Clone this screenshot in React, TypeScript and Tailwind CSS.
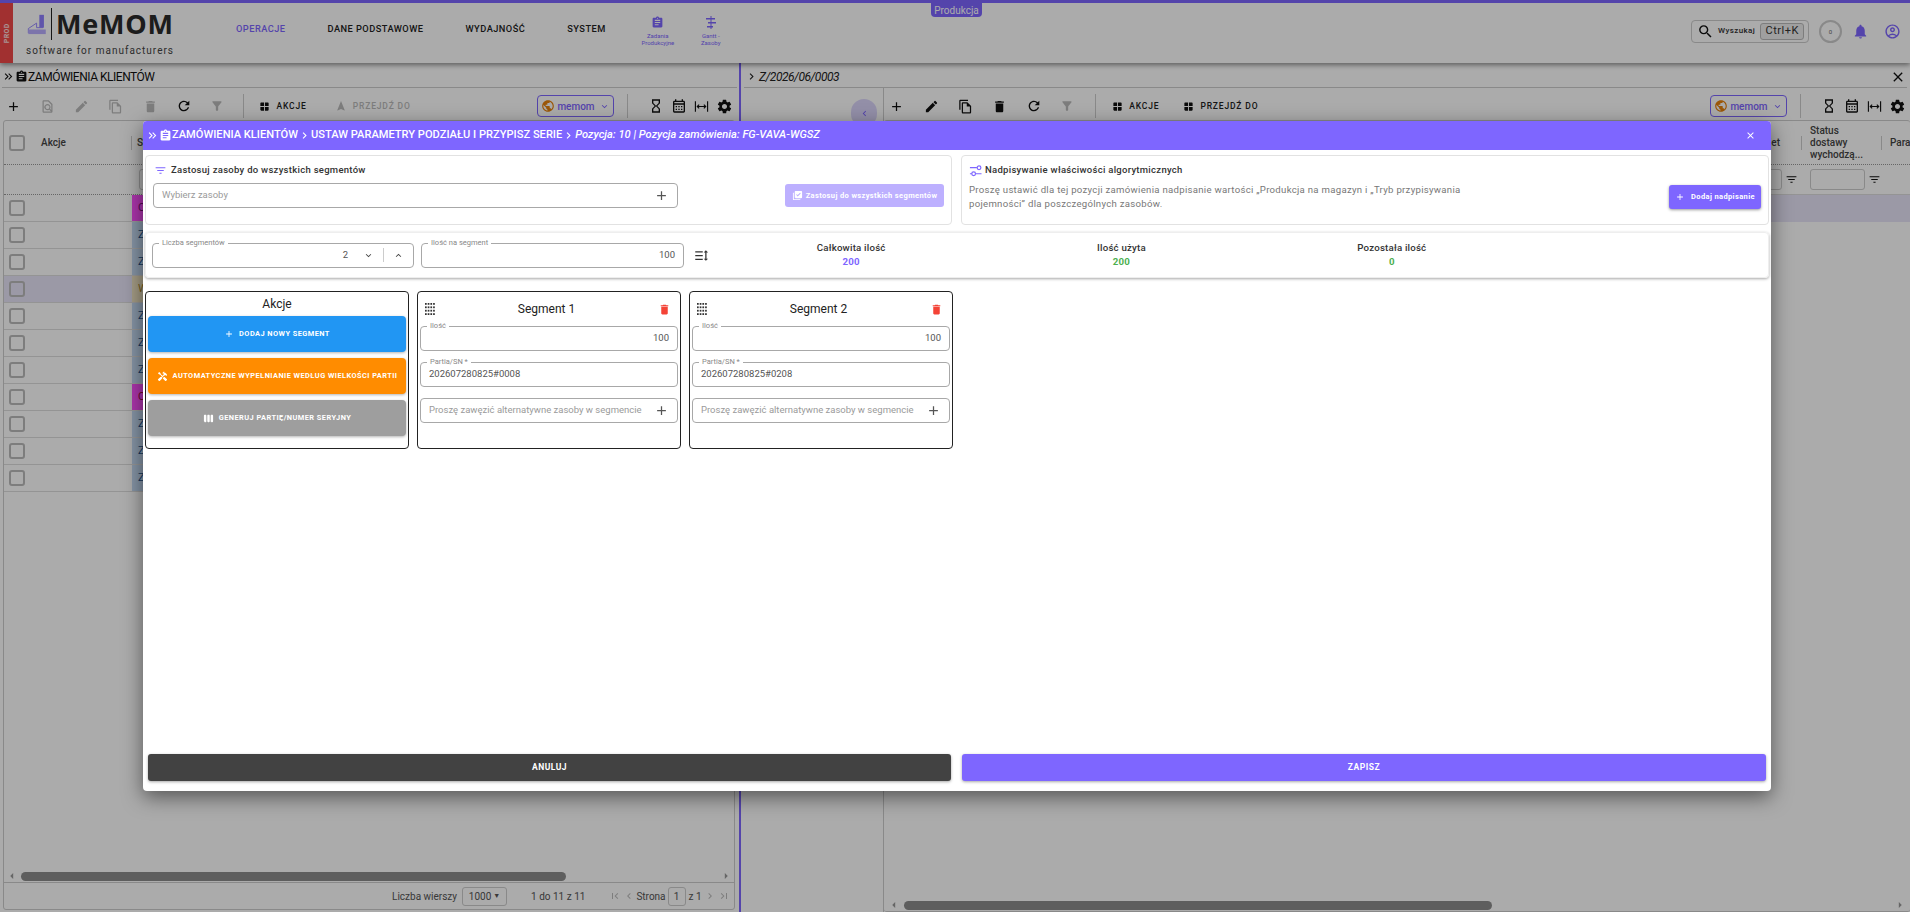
import type { ReactNode } from "react";
import {
  MdAdd,
  MdArrowLeft,
  MdArrowRight,
  MdAssignment,
  MdChevronLeft,
  MdChevronRight,
  MdClose,
  MdDelete,
  MdEdit,
  MdExpandLess,
  MdExpandMore,
  MdFilterAlt,
  MdFilterList,
  MdFirstPage,
  MdFormatLineSpacing,
  MdHandyman,
  MdHourglassEmpty,
  MdKeyboardDoubleArrowRight,
  MdLastPage,
  MdLibraryAddCheck,
  MdNavigation,
  MdNotifications,
  MdOutlineAccountCircle,
  MdOutlineCalendarMonth,
  MdOutlineFileCopy,
  MdOutlineFindInPage,
  MdPublic,
  MdRefresh,
  MdSearch,
  MdSettings,
  MdViewWeek,
  MdWindow,
} from "react-icons/md";

const ROWS = [
  { letter: "O", cell: "bg-[#ff4fff]", text: "text-[#7a0a7a]", selected: false },
  { letter: "Z", cell: "bg-[#c5dcf5]", text: "text-[#1a4f8a]", selected: false },
  { letter: "Z", cell: "bg-[#c5dcf5]", text: "text-[#1a4f8a]", selected: false },
  { letter: "W", cell: "bg-[#f2e6c4]", text: "text-[#b08a2a]", selected: true },
  { letter: "Z", cell: "bg-[#c5dcf5]", text: "text-[#1a4f8a]", selected: false },
  { letter: "Z", cell: "bg-[#c5dcf5]", text: "text-[#1a4f8a]", selected: false },
  { letter: "Z", cell: "bg-[#c5dcf5]", text: "text-[#1a4f8a]", selected: false },
  { letter: "O", cell: "bg-[#ff4fff]", text: "text-[#a00a3a]", selected: false },
  { letter: "Z", cell: "bg-[#c5dcf5]", text: "text-[#1a4f8a]", selected: false },
  { letter: "Z", cell: "bg-[#c5dcf5]", text: "text-[#1a4f8a]", selected: false },
  { letter: "Z", cell: "bg-[#c5dcf5]", text: "text-[#1a4f8a]", selected: false },
];

function FitColumnsIcon({ className }: { className?: string }) {
  return (
    <svg viewBox="0 0 16 16" className={className} fill="none" stroke="currentColor" strokeWidth="1.2">
      <path d="M1.5 2.5v11M14.5 2.5v11M3.5 8h9" />
      <path d="M5.5 6L3.5 8l2 2M10.5 6l2 2-2 2" />
    </svg>
  );
}

function DotsIcon() {
  return (
    <svg viewBox="0 0 10 13" className="h-[13px] w-[10px] text-[#333]" fill="currentColor">
      {[0, 1, 2, 3].map((y) =>
        [0, 1, 2, 3].map((x) => (
          <rect key={`${x}-${y}`} x={x * 2.7} y={y * 3.4} width="1.7" height="1.8" />
        )),
      )}
    </svg>
  );
}

function SlidersIcon() {
  return (
    <svg viewBox="0 0 14 14" className="mr-[3px] h-[13px] w-[13px] text-[#7e66ff]" fill="none" stroke="currentColor" strokeWidth="1.3">
      <path d="M1 4h7.5M1 10.5h2M7 10.5h6.5" />
      <circle cx="10.8" cy="4" r="2" />
      <circle cx="5" cy="10.5" r="2" />
    </svg>
  );
}

function Logo() {
  return (
    <div className="ml-[13px] flex w-[160px] shrink-0 flex-col">
      <div className="flex h-[40px] items-center pt-[1px]">
        <svg viewBox="0 0 22 24" className="ml-[1px] h-[22px] w-[21px] shrink-0" fill="none">
          <path d="M1 22V17l9-6v5h7" stroke="#8f7fff" strokeWidth="1" />
          <rect x="13" y="2" width="5" height="14" fill="#8f7fff" />
          <rect x="1" y="18" width="19" height="5" fill="#b9adff" />
        </svg>
        <div className="ml-[3px] mr-[4px] h-[32px] w-px shrink-0 bg-[#222]" />
        <span className="text-[27px] font-bold leading-none tracking-[0.03em] text-[#2b2b2b] font-['Open_Sans',sans-serif]">
          MeMOM
        </span>
      </div>
      <span className="mt-[3px] whitespace-nowrap text-[10px] leading-none tracking-[0.1em] text-[#444]">
        software for manufacturers
      </span>
    </div>
  );
}

function Header() {
  return (
    <header className="relative z-10 flex h-[63px] shrink-0 border-t-[3px] border-[#7e66ff] bg-white shadow-[0_2px_5px_rgba(0,0,0,0.45)]">
      <div className="flex h-full w-[13px] shrink-0 items-center justify-center bg-[#f04848]">
        <span className="-rotate-90 text-[7px] font-bold tracking-[0.05em] text-white/80">PROD</span>
      </div>
      <Logo />
      <nav className="ml-[50px] flex items-center gap-[42px] pb-[8px] text-[9.25px] font-medium tracking-[0.05em] text-[#222]">
        <span className="text-[#7e66ff]">OPERACJE</span>
        <span>DANE PODSTAWOWE</span>
        <span>WYDAJNOŚĆ</span>
        <span>SYSTEM</span>
      </nav>
      <div className="ml-[28px] flex w-[48px] flex-col items-center pt-[13px] text-center text-[6px] leading-[7px] text-[#7e66ff]">
        <MdAssignment className="mb-[3px] h-[13px] w-[13px]" />
        Zadania Produkcyjne
      </div>
      <div className="ml-[5px] flex w-[48px] flex-col items-center pt-[13px] text-center text-[6px] leading-[7px] text-[#7e66ff]">
        <svg viewBox="0 0 12 13" className="mb-[3px] h-[13px] w-[12px]" fill="currentColor">
          <path d="M5.5 0h1v13h-1zM1 2h9v1.6H1zM3 6h8v1.6H3zM2 10h6v1.6H2z" />
        </svg>
        Gantt -<br />
        Zasoby
      </div>
      <div className="absolute left-[931px] top-0 flex h-[14px] w-[51px] items-center justify-center rounded-b-[4px] bg-[#7e66ff] text-[10px] text-white">
        Produkcja
      </div>
      <div className="ml-auto mr-[9px] flex items-center pb-[4px]">
        <div className="flex h-[23px] w-[118px] items-center rounded-[4px] border border-[#ccc] pl-[5px]">
          <MdSearch className="h-[17px] w-[17px] text-[#111]" />
          <span className="ml-[4px] text-[8px] font-medium tracking-[0.05em] text-[#333]">Wyszukaj</span>
          <span className="ml-[5px] flex h-[17px] w-[44px] items-center justify-center rounded-[3px] border border-[#bbb] bg-[#eee] text-[11px] tracking-[0.05em] text-[#333]">
            Ctrl+K
          </span>
        </div>
        <div className="ml-[10px] flex h-[23px] w-[23px] items-center justify-center rounded-full border-2 border-[#ccc] text-[6px] text-[#666]">
          0
        </div>
        <MdNotifications className="ml-[10px] h-[17px] w-[17px] text-[#7e66ff]" />
        <MdOutlineAccountCircle className="ml-[15px] h-[17px] w-[17px] text-[#7e66ff]" />
      </div>
    </header>
  );
}

function ToolButton({ children, width = "w-[34.3px]" }: { children: ReactNode; width?: string }) {
  return <span className={`flex shrink-0 items-center justify-center ${width}`}>{children}</span>;
}

function RightTools() {
  return (
    <>
      <div className="flex h-[22px] w-[77px] items-center justify-center gap-[2px] rounded-[4px] border border-[#7e66ff] text-[10px] font-medium text-[#7e66ff]">
        <MdPublic className="h-[14px] w-[14px] text-[#e8820c]" />
        memom
        <MdExpandMore className="ml-[2px] h-[11px] w-[11px]" />
      </div>
      <div className="ml-[13px] h-[24px] w-px bg-[#ccc]" />
      <div className="ml-[20px] flex items-center gap-[7px] text-[#111]">
        <MdHourglassEmpty className="h-[16px] w-[16px]" />
        <MdOutlineCalendarMonth className="h-[16px] w-[16px]" />
        <FitColumnsIcon className="h-[15px] w-[15px]" />
        <MdSettings className="h-[17px] w-[17px]" />
      </div>
    </>
  );
}

function LeftPanel() {
  return (
    <section className="flex h-full w-[739px] shrink-0 flex-col">
      <div className="mx-[2px] flex h-[25px] shrink-0 items-center border-b border-[#ccc] pr-[3px] pt-[3px] text-[12px] tracking-[-0.04em] text-[#111]">
        <MdKeyboardDoubleArrowRight className="h-[13px] w-[13px]" />
        <MdAssignment className="h-[13px] w-[13px]" />
        <span>ZAMÓWIENIA KLIENTÓW</span>
      </div>
      <div className="flex h-[32px] shrink-0 items-center pt-[4px] text-[#bbb]">
        <ToolButton width="w-[26px] mr-[4px]">
          <MdAdd className="h-[15px] w-[15px] text-[#111]" />
        </ToolButton>
        <ToolButton>
          <MdOutlineFindInPage className="h-[15px] w-[15px]" />
        </ToolButton>
        <ToolButton>
          <MdEdit className="h-[15px] w-[15px]" />
        </ToolButton>
        <ToolButton>
          <MdOutlineFileCopy className="h-[15px] w-[15px]" />
        </ToolButton>
        <ToolButton>
          <MdDelete className="h-[15px] w-[15px]" />
        </ToolButton>
        <ToolButton>
          <MdRefresh className="h-[16px] w-[16px] text-[#111]" />
        </ToolButton>
        <ToolButton width="w-[32px]">
          <MdFilterAlt className="h-[14px] w-[14px]" />
        </ToolButton>
        <div className="ml-[10px] h-[24px] w-px bg-[#ccc]" />
        <MdWindow className="ml-[15px] h-[11px] w-[11px] text-[#111]" />
        <span className="ml-[6px] text-[8.5px] font-medium tracking-[0.1em] text-[#222]">AKCJE</span>
        <MdNavigation className="ml-[28px] h-[12px] w-[12px]" />
        <span className="ml-[6px] text-[8.5px] font-medium tracking-[0.1em]">PRZEJDŹ DO</span>
        <div className="ml-auto flex items-center pr-[6px]">
          <RightTools />
        </div>
      </div>
      <div className="mb-[2px] ml-[3px] mr-[4px] flex min-h-0 flex-1 flex-col rounded-[3px] border border-[#ccc]">
        <div className="flex h-[44px] shrink-0 items-center border-b border-dotted border-[#999]">
          <span className="ml-[5px] h-[16px] w-[16px] rounded-[3px] border-2 border-[#bbb]" />
          <span className="ml-[16px] w-[90px] text-[10px] font-medium text-[#444]">Akcje</span>
          <span className="h-[14px] w-px bg-[#ccc]" />
          <span className="ml-[5px] text-[10px] font-medium text-[#444]">Status</span>
        </div>
        <div className="flex h-[30px] shrink-0 items-center border-b border-dotted border-[#999] pl-[135px]">
          <span className="h-[21px] w-[60px] rounded-[3px] border border-[#ccc]" />
        </div>
        {ROWS.map((row, index) => (
          <div
            key={index}
            className={`flex h-[27px] shrink-0 items-center border-b border-[#ddd] ${row.selected ? "bg-[#e8e4f8]" : ""}`}
          >
            <span className="ml-[5px] h-[16px] w-[16px] rounded-[3px] border-2 border-[#bbb]" />
            <span className={`ml-[107px] flex h-full w-[120px] items-center pl-[6px] text-[11px] ${row.cell} ${row.text}`}>
              {row.letter}
            </span>
          </div>
        ))}
        <div className="mt-auto flex h-[13px] shrink-0 items-center px-[6px] pt-[1px]">
          <MdArrowLeft className="-ml-[5px] h-[14px] w-[14px] text-[#999]" />
          <div className="ml-[2px] h-[9px] w-[545px] rounded-full bg-[#8d8d8d]" />
          <MdArrowRight className="-mr-[5px] ml-auto h-[14px] w-[14px] text-[#999]" />
        </div>
        <div className="flex h-[27px] shrink-0 items-center border-t border-[#ccc] text-[10px] text-[#555]">
          <span className="ml-[388px]">Liczba wierszy</span>
          <span className="ml-[5px] flex h-[19px] w-[45px] items-center justify-center gap-[2px] rounded-[3px] border border-[#ccc]">
            1000 <span className="text-[7px]">▼</span>
          </span>
          <span className="ml-[24px]">1 do 11 z 11</span>
          <MdFirstPage className="ml-[24px] h-[12px] w-[12px] text-[#bbb]" />
          <MdChevronLeft className="ml-[2px] h-[12px] w-[12px] text-[#bbb]" />
          <span className="ml-[1px]">Strona</span>
          <span className="ml-[2px] flex h-[19px] w-[18px] items-center justify-center rounded-[3px] border border-[#ccc]">1</span>
          <span className="ml-[3px]">z 1</span>
          <MdChevronRight className="ml-[2px] h-[12px] w-[12px] text-[#bbb]" />
          <MdLastPage className="ml-[2px] h-[12px] w-[12px] text-[#bbb]" />
        </div>
      </div>
    </section>
  );
}

function RightPanel() {
  return (
    <section className="flex h-full min-w-0 flex-1 flex-col">
      <div className="mx-[3px] flex h-[25px] shrink-0 items-center border-b border-[#ccc] pt-[3px] text-[12px] italic tracking-[-0.04em] text-[#222]">
        <MdChevronRight className="ml-[1px] h-[13px] w-[13px]" />
        <span className="ml-[1px]">Z/2026/06/0003</span>
        <MdClose className="ml-auto mr-[1px] h-[16px] w-[16px] not-italic text-[#111]" />
      </div>
      <div className="flex min-h-0 flex-1">
        <div className="relative w-[142px] shrink-0">
          <span className="absolute left-[110px] top-[11px] flex h-[28px] w-[26px] items-center justify-center rounded-full bg-[#dcd6fb] text-[#7e66ff]">
            <MdChevronLeft className="h-[11px] w-[11px]" />
          </span>
        </div>
        <div className="flex min-w-0 flex-1 flex-col border-l border-[#ccc]">
          <div className="flex h-[32px] shrink-0 items-center pt-[4px] text-[#111]">
            <ToolButton width="w-[20px] ml-[2px] mr-[8px]">
              <MdAdd className="h-[15px] w-[15px]" />
            </ToolButton>
            <ToolButton>
              <MdEdit className="h-[15px] w-[15px]" />
            </ToolButton>
            <ToolButton>
              <MdOutlineFileCopy className="h-[15px] w-[15px]" />
            </ToolButton>
            <ToolButton>
              <MdDelete className="h-[15px] w-[15px]" />
            </ToolButton>
            <ToolButton>
              <MdRefresh className="h-[16px] w-[16px]" />
            </ToolButton>
            <ToolButton width="w-[32px]">
              <MdFilterAlt className="h-[14px] w-[14px] text-[#bbb]" />
            </ToolButton>
            <div className="ml-[12px] h-[24px] w-px bg-[#ccc]" />
            <MdWindow className="ml-[16px] h-[11px] w-[11px]" />
            <span className="ml-[6px] text-[8.5px] font-medium tracking-[0.1em] text-[#222]">AKCJE</span>
            <MdWindow className="ml-[24px] h-[11px] w-[11px]" />
            <span className="ml-[6px] text-[8.5px] font-medium tracking-[0.1em] text-[#222]">PRZEJDŹ DO</span>
            <div className="ml-auto flex items-center pr-[4px]">
              <RightTools />
            </div>
          </div>
          <div className="flex min-h-0 flex-1 flex-col rounded-[3px] border-b border-t border-[#ccc]">
            <div className="flex h-[44px] shrink-0 items-center justify-end border-b border-dotted border-[#999] text-[10px] font-medium leading-[12px] text-[#444]">
              <span className="mr-[21px]">Pakiet</span>
              <span className="h-[14px] w-px bg-[#ccc]" />
              <span className="ml-[8px] w-[71px] pr-[20px]">
                Status dostawy wychodzą...
              </span>
              <span className="h-[14px] w-px bg-[#ccc]" />
              <span className="ml-[8px] w-[20px] overflow-hidden">Para</span>
            </div>
            <div className="flex h-[30px] shrink-0 items-center justify-end border-b border-[#ddd] pr-[29px]">
              <span className="h-[21px] w-[55px] rounded-[3px] border border-[#ccc]" />
              <MdFilterList className="mx-[3px] h-[13px] w-[13px] text-[#111]" />
              <span className="ml-[9px] h-[21px] w-[55px] rounded-[3px] border border-[#ccc]" />
              <MdFilterList className="ml-[3px] h-[13px] w-[13px] text-[#111]" />
            </div>
            <div className="h-[27px] shrink-0 bg-[#e8e4f8]" />
            <div className="mt-auto flex h-[12px] shrink-0 items-center pl-[3px] pr-[3px]">
              <MdArrowLeft className="h-[14px] w-[14px] text-[#999]" />
              <div className="ml-[3px] h-[9px] w-[588px] rounded-full bg-[#8d8d8d]" />
              <MdArrowRight className="ml-auto h-[14px] w-[14px] text-[#999]" />
            </div>
          </div>
        </div>
      </div>
    </section>
  );
}

function Field({
  label,
  value,
  placeholder,
  alignRight,
  adornment,
  className = "",
}: {
  label?: string;
  value?: string;
  placeholder?: string;
  alignRight?: boolean;
  adornment?: ReactNode;
  className?: string;
}) {
  return (
    <div className={`relative flex h-[25px] items-center rounded-[4px] border border-[#a8a8a8] bg-white px-[8px] text-[9.5px] ${className}`}>
      {label && (
        <span className="absolute -top-[6px] left-[6px] bg-white px-[3px] text-[7.5px] leading-[10px] text-[#888]">
          {label}
        </span>
      )}
      {value !== undefined && (
        <span className={`flex-1 text-[#555] ${alignRight ? "text-right" : ""}`}>{value}</span>
      )}
      {placeholder && <span className="flex-1 whitespace-nowrap text-[#9a9a9a]">{placeholder}</span>}
      {adornment}
    </div>
  );
}

function ActionButton({ color, icon, children }: { color: string; icon: ReactNode; children: ReactNode }) {
  return (
    <div
      className={`flex h-[36px] items-center justify-center gap-[5px] whitespace-nowrap rounded-[4px] text-[7.4px] font-bold tracking-[0.06em] text-white shadow-[0_1px_3px_rgba(0,0,0,0.3)] ${color}`}
    >
      {icon}
      {children}
    </div>
  );
}

function SegmentCard({ title, batch }: { title: string; batch: string }) {
  return (
    <div className="flex h-[158px] w-[264px] flex-col rounded-[4px] border border-[#222] px-[2px]">
      <div className="flex h-[34px] items-center pl-[5px] pr-[7px]">
        <DotsIcon />
        <span className="flex-1 text-center text-[12px] text-[#222]">{title}</span>
        <MdDelete className="h-[13px] w-[13px] text-[#f44336]" />
      </div>
      <div className="flex flex-col gap-[11px]">
        <Field label="Ilość" value="100" alignRight />
        <Field label="Partia/SN *" value={batch} />
        <Field
          placeholder="Proszę zawęzić alternatywne zasoby w segmencie"
          adornment={<MdAdd className="ml-[3px] h-[15px] w-[15px] shrink-0 text-[#555]" />}
        />
      </div>
    </div>
  );
}

function Stat({ label, value, color }: { label: string; value: string; color: string }) {
  return (
    <div className="flex flex-col items-center gap-[3px] pb-[2px] text-[9.7px] font-medium leading-[11px] tracking-[0.02em]">
      <span className="text-[#333]">{label}</span>
      <span className={`font-bold ${color}`}>{value}</span>
    </div>
  );
}

function Modal() {
  return (
    <div className="absolute left-[143px] top-[121px] z-30 flex h-[670px] w-[1628px] flex-col rounded-[4px] bg-white px-[2px] shadow-[0_6px_20px_rgba(0,0,0,0.5)]">
      <div className="-mx-[2px] flex h-[29px] shrink-0 items-center rounded-t-[4px] bg-[#7e66ff] pl-[3px] pr-[15px] text-[11.1px] font-medium text-white">
        <MdKeyboardDoubleArrowRight className="h-[13px] w-[13px]" />
        <MdAssignment className="h-[13px] w-[13px]" />
        <span>ZAMÓWIENIA KLIENTÓW</span>
        <MdChevronRight className="h-[13px] w-[13px]" />
        <span>USTAW PARAMETRY PODZIAŁU I PRZYPISZ SERIE</span>
        <MdChevronRight className="h-[13px] w-[13px]" />
        <span className="italic">Pozycja: 10 | Pozycja zamówienia: FG-VAVA-WGSZ</span>
        <MdClose className="ml-auto h-[11px] w-[11px]" />
      </div>

      <div className="mt-[5px] flex h-[70px] gap-[9px]">
        <div className="relative w-[807px] rounded-[4px] border border-[#e2e2e2] pl-[7px] pr-[7px] pt-[7px]">
          <div className="flex h-[14px] items-center pl-[1px] text-[9.5px] font-medium tracking-[0.03em] text-[#333]">
            <MdFilterList className="mr-[4px] h-[13px] w-[13px] text-[#7e66ff]" />
            Zastosuj zasoby do wszystkich segmentów
          </div>
          <div className="mt-[6px] flex items-center justify-between">
            <Field
              className="w-[525px]"
              placeholder="Wybierz zasoby"
              adornment={<MdAdd className="h-[15px] w-[15px] shrink-0 text-[#555]" />}
            />
            <div className="flex h-[23px] w-[159px] items-center justify-center gap-[3px] rounded-[3px] bg-[#bdb0ff] text-[7.5px] font-bold tracking-[0.05em] text-white">
              <MdLibraryAddCheck className="h-[11px] w-[11px]" />
              Zastosuj do wszystkich segmentów
            </div>
          </div>
        </div>
        <div className="relative flex w-[808px] items-start justify-between rounded-[4px] border border-[#e2e2e2] pl-[7px] pr-[7px] pt-[7px]">
          <div>
            <div className="flex h-[14px] items-center text-[9.5px] font-medium tracking-[0.03em] text-[#333]">
              <SlidersIcon />
              Nadpisywanie właściwości algorytmicznych
            </div>
            <p className="mt-[6px] w-[520px] text-[9.6px] leading-[14px] tracking-[0.03em] text-[#777]">
              Proszę ustawić dla tej pozycji zamówienia nadpisanie wartości „Produkcja na magazyn i „Tryb przypisywania pojemności” dla poszczególnych zasobów.
            </p>
          </div>
          <div className="mt-[22px] flex h-[24px] w-[92px] items-center justify-center gap-[6px] rounded-[3px] bg-[#7e66ff] text-[7.5px] font-bold tracking-[0.05em] text-white shadow-[0_1px_3px_rgba(0,0,0,0.4)]">
            <MdAdd className="h-[10px] w-[10px]" />
            Dodaj nadpisanie
          </div>
        </div>
      </div>

      <div className="mt-[7px] flex h-[46px] items-center rounded-[4px] border border-[#eee] pl-[6px] shadow-[0_1px_3px_rgba(0,0,0,0.35)]">
        <Field
          className="w-[262px]"
          label="Liczba segmentów"
          adornment={
            <div className="flex h-full items-center">
              <span className="mr-[15px] text-[#555]">2</span>
              <MdExpandMore className="h-[11px] w-[11px] text-[#444]" />
              <span className="ml-[9px] mr-[9px] h-[14px] w-px bg-[#ccc]" />
              <MdExpandLess className="mr-[1px] h-[11px] w-[11px] text-[#444]" />
            </div>
          }
          value=""
        />
        <Field className="ml-[7px] w-[263px]" label="Ilość na segment" value="100" alignRight />
        <MdFormatLineSpacing className="ml-[10px] h-[15px] w-[15px] -scale-x-100 text-[#333]" />
        <div className="ml-[7px] grid w-[811px] grid-cols-3">
          <Stat label="Całkowita ilość" value="200" color="text-[#7e66ff]" />
          <Stat label="Ilość użyta" value="200" color="text-[#4caf50]" />
          <Stat label="Pozostała ilość" value="0" color="text-[#4caf50]" />
        </div>
      </div>

      <div className="mt-[13px] flex gap-[8px]">
        <div className="flex h-[158px] w-[264px] flex-col rounded-[4px] border border-[#222] px-[2px]">
          <div className="flex h-[24px] items-center justify-center text-[12px] text-[#222]">Akcje</div>
          <div className="flex flex-col gap-[6px]">
            <ActionButton color="bg-[#2196f3]" icon={<MdAdd className="h-[10px] w-[10px]" />}>
              DODAJ NOWY SEGMENT
            </ActionButton>
            <ActionButton color="bg-[#ff8c00]" icon={<MdHandyman className="h-[11px] w-[11px]" />}>
              AUTOMATYCZNE WYPEŁNIANIE WEDŁUG WIELKOŚCI PARTII
            </ActionButton>
            <ActionButton color="bg-[#9e9e9e]" icon={<MdViewWeek className="h-[11px] w-[11px]" />}>
              GENERUJ PARTIĘ/NUMER SERYJNY
            </ActionButton>
          </div>
        </div>
        <SegmentCard title="Segment 1" batch="202607280825#0008" />
        <SegmentCard title="Segment 2" batch="202607280825#0208" />
      </div>

      <div className="mt-auto mb-[10px] flex gap-[11px] px-[3px]">
        <div className="flex h-[27px] w-[803px] items-center justify-center rounded-[3px] bg-[#424242] text-[8.5px] font-bold tracking-[0.06em] text-white shadow-[0_1px_3px_rgba(0,0,0,0.35)]">
          ANULUJ
        </div>
        <div className="flex h-[27px] w-[804px] items-center justify-center rounded-[3px] bg-[#7e66ff] text-[8.5px] font-bold tracking-[0.06em] text-white shadow-[0_1px_3px_rgba(0,0,0,0.35)]">
          ZAPISZ
        </div>
      </div>
    </div>
  );
}

export default function App() {
  return (
    <div className="relative flex h-[912px] flex-col overflow-hidden bg-white font-['Roboto',sans-serif]">
      <Header />
      <main className="flex min-h-0 flex-1">
        <LeftPanel />
        <div className="h-full w-[2px] shrink-0 bg-[#7e66ff]" />
        <RightPanel />
      </main>
      {/* dimmed backdrop */}
      <div className="absolute inset-0 z-20 bg-black/33" />
      <Modal />
    </div>
  );
}
